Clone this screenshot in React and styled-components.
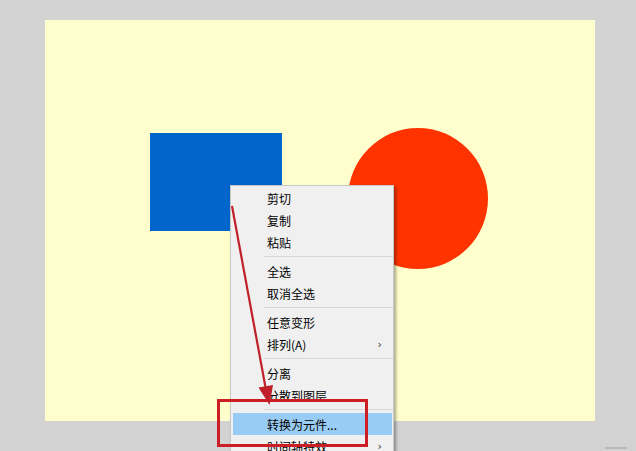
import React from "react";
import styled, { createGlobalStyle } from "styled-components";

const GlobalStyle = createGlobalStyle`
  html, body {
    margin: 0;
    padding: 0;
    background: #d3d3d3;
  }
  * {
    box-sizing: border-box;
  }
`;

const Page = styled.div`
  position: relative;
  width: 636px;
  height: 451px;
  overflow: hidden;
  background: #d3d3d3;
  padding: 20px 0 0 45px;
  font-family: "Noto Sans CJK SC", "Noto Sans", sans-serif;
`;

const Stage = styled.div`
  position: relative;
  width: 550px;
  height: 401px;
  background: #ffffcd;
`;

/* shapes sit on a free canvas, so their place is the content */
const Rect = styled.div`
  position: absolute;
  left: 105px;
  top: 113px;
  width: 132px;
  height: 98px;
  background: #0066cc;
`;

const Circle = styled.div`
  position: absolute;
  left: 303px;
  top: 108px;
  width: 140px;
  height: 141px;
  border-radius: 50%;
  background: #ff3300;
`;

const Menu = styled.div`
  position: absolute;
  left: 230px;
  top: 185px;
  width: 164px;
  padding: 1px 0 4px;
  background: #f0f0f0;
  border: 1px solid #c8c8c8;
  box-shadow: 2px 2px 3px rgba(0, 0, 0, 0.35);
  display: flex;
  flex-direction: column;
`;

const Item = styled.div`
  height: 22px;
  margin: 0 1px 0 2px;
  padding-left: 34px;
  padding-right: 10px;
  display: flex;
  align-items: center;
  justify-content: space-between;
  font-size: 12px;
  color: #000;
  background: ${(p) => (p.$active ? "#99ccf4" : "transparent")};
`;

const Arrow = styled.span`
  font-family: "DejaVu Sans", sans-serif;
  font-size: 11px;
  color: #333;
`;

const Separator = styled.div`
  height: 7px;
  display: flex;
  align-items: center;
  padding-left: 33px;
  &::after {
    content: "";
    flex: 1;
    height: 1px;
    background: #d7d7d7;
  }
`;

const Callout = styled.div`
  position: absolute;
  left: 217px;
  top: 399px;
  width: 151px;
  height: 48px;
  border: 3px solid #cc1f25;
`;

const Overlay = styled.svg`
  position: absolute;
  left: 0;
  top: 0;
  pointer-events: none;
`;

const Grip = styled.div`
  position: absolute;
  left: 605px;
  top: 447px;
  width: 22px;
  height: 2px;
  background: #b8b8b8;
`;

const groups = [
  [{ t: "剪切" }, { t: "复制" }, { t: "粘贴" }],
  [{ t: "全选" }, { t: "取消全选" }],
  [{ t: "任意变形" }, { t: "排列(A)", sub: true }],
  [{ t: "分离" }, { t: "分散到图层" }],
  [{ t: "转换为元件...", active: true }, { t: "时间轴特效", sub: true }],
];

export default function App() {
  return (
    <>
      <GlobalStyle />
      <Page>
        <Stage>
          <Rect />
          <Circle />
        </Stage>
        <Menu>
          {groups.map((g, gi) => (
            <React.Fragment key={gi}>
              {gi > 0 && <Separator />}
              {g.map((it) => (
                <Item key={it.t} $active={it.active}>
                  <span>{it.t}</span>
                  {it.sub && <Arrow>›</Arrow>}
                </Item>
              ))}
            </React.Fragment>
          ))}
        </Menu>
        <Callout />
        <Overlay width="636" height="451" viewBox="0 0 636 451">
          <line x1="232" y1="206" x2="266" y2="390" stroke="#c0202a" strokeWidth="2.2" />
          <polygon points="269.5,405 258.5,387.5 273,385" fill="#c0202a" />
        </Overlay>
        <Grip />
      </Page>
    </>
  );
}
